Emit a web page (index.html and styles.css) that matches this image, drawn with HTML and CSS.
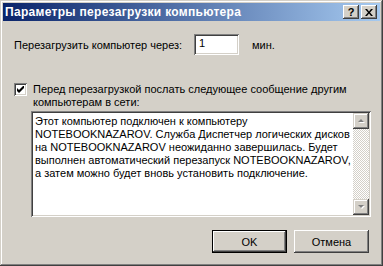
FILE: index.html
```html
<!DOCTYPE html>
<html lang="ru">
<head>
    <meta charset="UTF-8">
    <title>Параметры перезагрузки компьютера</title>
    <link rel="stylesheet" href="styles.css">
</head>
<body>
    <div class="window">
        <div class="titlebar">
            <span class="title">Параметры перезагрузки компьютера</span>
            <div class="tbtn help">?</div>
            <div class="tbtn close">
                <svg width="8" height="7" viewBox="0 0 8 7"><path d="M0 0h2l2 2.5L6 0h2L5 3.5 8 7H6L4 4.5 2 7H0l3-3.5z" fill="#000"/></svg>
            </div>
        </div>
        <div class="content">
            <div class="row">
                <span class="label">Перезагрузить компьютер через:</span>
                <div class="field">1</div>
                <span class="unit">мин.</span>
            </div>
            <div class="check">
                <div class="box">
                    <svg width="7" height="7" viewBox="0 0 7 7"><path d="M0 2v3l2 2 5-5V-1L2 4z" fill="#000"/></svg>
                </div>
                <div class="check-text">Перед перезагрузкой послать следующее сообщение другим<br>компьютерам в сети:</div>
            </div>
            <div class="memo">
                <div class="memo-text">Этот компьютер подключен к компьютеру<br>NOTEBOOKNAZAROV. Служба Диспетчер логических дисков<br>на NOTEBOOKNAZAROV неожиданно завершилась. Будет<br>выполнен автоматический перезапуск NOTEBOOKNAZAROV,<br>а затем можно будет вновь установить подключение.</div>
                <div class="scroll">
                    <div class="arrow up"><svg width="7" height="5" viewBox="0 0 7 5"><path d="M1 4h6L4 1z" fill="#fff"/><path d="M0 3h6L3 0z" fill="#808080"/></svg></div>
                    <div class="track"></div>
                    <div class="arrow down"><svg width="7" height="5" viewBox="0 0 7 5"><path d="M1 1h6L4 4z" fill="#fff"/><path d="M0 0h6L3 3z" fill="#808080"/></svg></div>
                </div>
            </div>
            <div class="buttons">
                <div class="btn default">OK</div>
                <div class="btn">Отмена</div>
            </div>
        </div>
    </div>
</body>
</html>
```

FILE: styles.css
```css
* {
    margin: 0;
    padding: 0;
    box-sizing: border-box;
}
body {
    background: #d4d0c8;
    font-family: "Liberation Sans", Arial, sans-serif;
    font-size: 11px;
    color: #000;
}
.window {
    width: 383px;
    height: 266px;
    padding: 3px;
    background: #d4d0c8;
    box-shadow: inset -1px -1px #404040, inset 1px 1px #d4d0c8, inset -2px -2px #808080, inset 2px 2px #fff;
}
.titlebar {
    height: 18px;
    display: flex;
    align-items: center;
    padding: 0 3px 0 2px;
    background: linear-gradient(to right, #0a246a, #a6caf0);
}
.title {
    flex: 1;
    color: #fff;
    font-weight: bold;
    font-size: 12px;
    letter-spacing: 0.3px;
}
.tbtn {
    width: 16px;
    height: 14px;
    display: flex;
    align-items: center;
    justify-content: center;
    background: #d4d0c8;
    box-shadow: inset -1px -1px #404040, inset 1px 1px #fff, inset -2px -2px #808080, inset 2px 2px #d4d0c8;
    font-weight: bold;
    font-size: 11px;
}
.help {
    margin-right: 2px;
}
.content {
    padding: 0 11px 0 11px;
}
.row {
    display: flex;
    align-items: center;
    height: 21px;
    margin-top: 13px;
}
.label {
    width: 180px;
}
.field {
    width: 45px;
    height: 21px;
    padding: 3px 0 0 5px;
    background: #fff;
    box-shadow: inset 1px 1px #808080, inset -1px -1px #fff, inset 2px 2px #404040, inset -2px -2px #d4d0c8;
}
.unit {
    margin-left: 13px;
}
.check {
    display: flex;
    margin-top: 28px;
    line-height: 13px;
}
.box {
    width: 13px;
    height: 13px;
    display: flex;
    align-items: center;
    justify-content: center;
    background: #fff;
    box-shadow: inset 1px 1px #808080, inset -1px -1px #fff, inset 2px 2px #404040, inset -2px -2px #d4d0c8;
}
.check-text {
    margin-left: 6px;
}
.memo {
    display: flex;
    width: 340px;
    height: 106px;
    margin: 2px 0 0 17px;
    padding: 2px;
    background: #fff;
    box-shadow: inset 1px 1px #808080, inset -1px -1px #fff, inset 2px 2px #404040, inset -2px -2px #d4d0c8;
}
.memo-text {
    flex: 1;
    padding: 2px 0 0 2px;
    line-height: 13px;
}
.scroll {
    width: 16px;
    display: flex;
    flex-direction: column;
}
.arrow {
    height: 16px;
    display: flex;
    align-items: center;
    justify-content: center;
    background: #d4d0c8;
    box-shadow: inset -1px -1px #404040, inset 1px 1px #d4d0c8, inset -2px -2px #808080, inset 2px 2px #fff;
}
.track {
    flex: 1;
    background: repeating-conic-gradient(#fff 0 25%, #d4d0c8 0 50%) 0 0 / 2px 2px;
}
.buttons {
    display: flex;
    justify-content: flex-end;
    gap: 7px;
    margin-top: 13px;
}
.btn {
    width: 75px;
    height: 23px;
    display: flex;
    align-items: center;
    justify-content: center;
    box-shadow: inset -1px -1px #404040, inset 1px 1px #fff, inset -2px -2px #808080, inset 2px 2px #d4d0c8;
}
.btn.default {
    border: 1px solid #000;
    box-shadow: inset -1px -1px #404040, inset 1px 1px #fff, inset -2px -2px #808080;
}
```
